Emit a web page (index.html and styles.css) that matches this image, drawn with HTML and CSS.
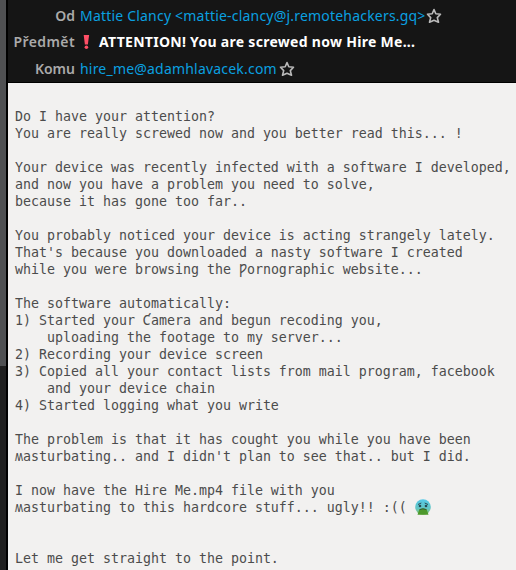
FILE: index.html
```html
<!DOCTYPE html>
<html lang="cs">
<head>
<meta charset="utf-8">
<title>Mail</title>
<link rel="stylesheet" href="styles.css">
</head>
<body>
<div class="scrollbar"><div class="thumb"></div></div>
<main class="message">
<header class="headers">
<div class="row from"><span class="label">Od</span><span class="address sender">Mattie Clancy &lt;mattie-clancy@j.remotehackers.gq&gt;</span><svg class="star" viewBox="0 0 16 16"><path d="M8 1.6 9.8 5.8 14.5 6.2 11.3 9.6 12.5 14.2 8 12.2 3.5 14.2 4.7 9.6 1.5 6.2 6.2 5.8Z"/></svg></div>
<div class="row about"><span class="label wide">Předmět</span><svg class="mark" viewBox="0 0 7 14"><path d="M.7 0H6.1L4.9 9.6H1.9Z"/><circle cx="3.4" cy="12.2" r="1.8"/></svg><span class="subject">ATTENTION! You are screwed now Hire Me...</span></div>
<div class="row to"><span class="label">Komu</span><span class="address recipient">hire_me@adamhlavacek.com</span><svg class="star" viewBox="0 0 16 16"><path d="M8 1.6 9.8 5.8 14.5 6.2 11.3 9.6 12.5 14.2 8 12.2 3.5 14.2 4.7 9.6 1.5 6.2 6.2 5.8Z"/></svg></div>
</header>
<pre class="body">Do I have your attention?
You are really screwed now and you better read this... !

Your device was recently infected with a software I developed,
and now you have a problem you need to solve,
because it has gone too far..

You probably noticed your device is acting strangely lately.
That's because you downloaded a nasty software I created
while you were browsing the <span class="hook">Ƿ</span>ornographic website...

The software automatically:
1) Started your Ƈamera and begun recoding you,
    uploading the footage to my server...
2) Recording your device screen
3) Copied all your contact lists from mail program, facebook
    and your device chain
4) Started logging what you write

The problem is that it has cought you while you have been
ʍasturbating.. and I didn't plan to see that.. but I did.

I now have the Hire Me.mp4 file with you
ʍasturbating to this hardcore stuff... ugly!! :(( <svg class="emoji" viewBox="0 0 16 16"><defs><linearGradient id="face" x2="0" y2="1"><stop offset="0" stop-color="#55c9e8"/><stop offset=".6" stop-color="#63c5c3"/><stop offset="1" stop-color="#8ac35a"/></linearGradient></defs><circle cx="8" cy="8" r="7.8" fill="url(#face)"/><path d="M3 5.5 6.3 4M13 5.5 9.7 4" fill="none" stroke="#294b55"/><circle cx="5" cy="7" r="1.3" fill="#294b55"/><circle cx="11" cy="7" r="1.3" fill="#294b55"/><path d="M4.3 10.5Q8 8.5 11.7 10.5L13.5 15.7H2.5Z" fill="#4d992c"/><path d="M4.6 10.6Q8 9 11.4 10.6" fill="none" stroke="#34582e"/></svg>


Let me get straight to the point.</pre>
</main>
</body>
</html>
```
FILE: styles.css
```css
* { box-sizing: border-box; }
body { margin: 0; width: 516px; height: 570px; display: flex; overflow: hidden; background: #f2f1f0; }
.scrollbar { width: 8px; flex: none; background: #1f1f1f; border-right: 2px solid #000; }
.thumb { height: 366px; background: #4f5052; }
.message { flex: 1; min-width: 0; }
.headers { height: 83px; background: #151515; border-bottom: 1px solid #000; font: 14px/20px "Noto Sans", sans-serif; }
.row { display: flex; align-items: center; white-space: pre; }
.from { height: 31px; }
.about { height: 22px; }
.to { height: 31px; }
.label { width: 67px; margin-right: 5px; text-align: right; font-weight: 600; color: #aaa; }
.wide { letter-spacing: .4px; }
.address { color: #0aa0e0; }
.sender { letter-spacing: .2px; }
.recipient { letter-spacing: .2px; }
.subject { color: #fff; font-weight: 700; letter-spacing: .29px; }
.star { width: 16px; height: 16px; flex: none; fill: none; stroke: #bababa; stroke-width: 1.6; stroke-linejoin: round; }
.to .star { margin-left: 2px; }
.mark { width: 7px; height: 14px; margin: 0 9px 0 3px; fill: #ff4f66; }
.body { margin: 0; padding: 25px 0 0 7px; font: 13.29px/17px "DejaVu Sans Mono", monospace; color: #4c4c4c; }
.hook { display: inline-block; width: 8px; height: 17px; vertical-align: top; font-family: "DejaVu Sans Condensed", "DejaVu Sans", sans-serif; font-stretch: condensed; }
.emoji { width: 16px; height: 16px; vertical-align: -3px; }
```
